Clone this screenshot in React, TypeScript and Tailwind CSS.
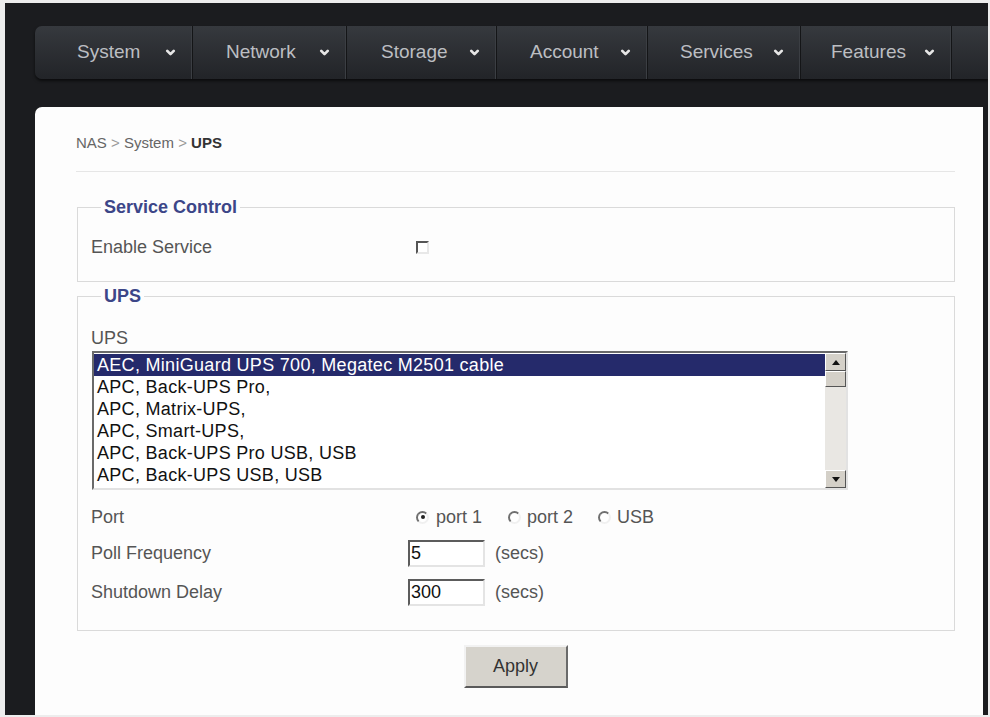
import { ChevronDown } from 'lucide-react';

const menus = [
  { label: 'System', w: 'w-[158px] pl-[42px]' },
  { label: 'Network', w: 'w-[154px] pl-[33px]' },
  { label: 'Storage', w: 'w-[150px] pl-[34px]' },
  { label: 'Account', w: 'w-[151px] pl-[33px]' },
  { label: 'Services', w: 'w-[153px] pl-[32px]' },
  { label: 'Features', w: 'w-[151px] pl-[30px]' },
];

const upsModels = [
  'AEC, MiniGuard UPS 700, Megatec M2501 cable',
  'APC, Back-UPS Pro,',
  'APC, Matrix-UPS,',
  'APC, Smart-UPS,',
  'APC, Back-UPS Pro USB, USB',
  'APC, Back-UPS USB, USB',
];

function Radio({ checked }: { checked?: boolean }) {
  return (
    <span className="shrink-0 w-[13px] h-[13px] rounded-full border-2 border-t-[#6f6f6f] border-l-[#6f6f6f] border-r-[#f0f0f0] border-b-[#f0f0f0] bg-white flex items-center justify-center">
      {checked && <span className="w-[4px] h-[4px] rounded-full bg-[#222]" />}
    </span>
  );
}

function ScrollButton({ up }: { up?: boolean }) {
  return (
    <div className="h-[18px] bg-[#d4d0c8] border border-t-white border-l-white border-r-[#555] border-b-[#555] flex items-center justify-center">
      <svg width="8" height="5" viewBox="0 0 8 5">
        <path d={up ? 'M0 5 L4 0 L8 5 Z' : 'M0 0 L4 5 L8 0 Z'} fill="#111" />
      </svg>
    </div>
  );
}

function SecsField({ value }: { value: string }) {
  return (
    <div className="flex items-center gap-[10px]">
      <div className="w-[77px] h-[27px] bg-white border-2 border-t-[#5c5c5c] border-l-[#5c5c5c] border-r-[#e4e4e4] border-b-[#e4e4e4] pl-[1px] flex items-center text-[18px] text-[#111]">
        {value}
      </div>
      <span className="text-[#555]">(secs)</span>
    </div>
  );
}

export default function App() {
  return (
    <div className="w-[990px] h-[717px] bg-[#ededed] pt-[3px] pl-[5px] pr-[2px] pb-[2px] flex font-['Liberation_Sans',Arial,sans-serif]">
      <div className="flex-1 bg-[#1b1c1f] flex flex-col pl-[30px] pt-[23px] overflow-hidden">
        {/* top menu */}
        <nav className="h-[53px] flex rounded-l-[7px] bg-gradient-to-b from-[#36393e] to-[#222428] shadow-[0_2px_3px_rgba(0,0,0,0.6)] shrink-0">
          {menus.map((m) => (
            <div
              key={m.label}
              className={`${m.w} h-full flex items-center justify-between pr-[15px] border-r border-r-[#141517] shadow-[inset_-1px_0_0_#3b3e43] text-[19px] text-[#bcbec2]`}
            >
              <span>{m.label}</span>
              <ChevronDown className="w-[13px] h-[13px] text-[#e6e6e6]" strokeWidth={5} />
            </div>
          ))}
          <div className="flex-1" />
        </nav>

        {/* main panel */}
        <div className="mt-[28px] mr-[5px] flex-1 bg-[#fdfdfd] rounded-tl-[7px] pl-[41px] pr-[28px] pt-[26px] text-[18px] text-[#555]">
          <div className="text-[15px] leading-[20px] text-[#666]">
            NAS <span className="text-[#999]">&gt;</span> System <span className="text-[#999]">&gt;</span>{' '}
            <span className="font-bold text-[#333]">UPS</span>
          </div>
          <div className="mt-[18px] border-t border-[#e6e6e6]" />

          <fieldset className="mt-[24px] ml-px border border-[#dadada] px-[13px] pb-[23px] pt-[18px]">
            <legend className="ml-[10px] px-[3px] font-bold text-[#3c4688] leading-[22px]">Service Control</legend>
            <div className="flex items-center h-[22px]">
              <span className="w-[325px]">Enable Service</span>
              <span className="shrink-0 w-[13px] h-[13px] bg-white border-2 border-t-[#555] border-l-[#555] border-r-[#e8e8e8] border-b-[#e8e8e8]" />
            </div>
          </fieldset>

          <fieldset className="mt-[3px] ml-px border border-[#dadada] px-[13px] pb-[24px] pt-[20px]">
            <legend className="ml-[10px] px-[3px] font-bold text-[#3c4688] leading-[22px]">UPS</legend>
            <div className="leading-[22px]">UPS</div>
            <div className="mt-[2px] ml-[1px] w-[756px] h-[139px] border-2 border-t-[#6a6a6a] border-l-[#6a6a6a] border-r-[#e2e2e2] border-b-[#e2e2e2] bg-white flex text-[#111] overflow-hidden">
              <div className="flex-1 pt-px tracking-[0.3px]">
                {upsModels.map((m, i) => (
                  <div
                    key={m}
                    className={`h-[22px] leading-[22px] pl-[3px] whitespace-nowrap ${i === 0 ? 'bg-[#252a6b] text-white' : ''}`}
                  >
                    {m}
                  </div>
                ))}
              </div>
              <div className="w-[21px] flex flex-col bg-[#e9e7e3]">
                <ScrollButton up />
                <div className="h-[16px] bg-[#d4d0c8] border border-t-white border-l-white border-r-[#555] border-b-[#555]" />
                <div className="flex-1" />
                <ScrollButton />
              </div>
            </div>

            <div className="mt-[16px] flex items-center h-[22px]">
              <span className="w-[325px]">Port</span>
              <div className="flex items-center">
                <Radio checked />
                <span className="ml-[7px] mr-[26px]">port 1</span>
                <Radio />
                <span className="ml-[6px] mr-[25px]">port 2</span>
                <Radio />
                <span className="ml-[6px]">USB</span>
              </div>
            </div>

            <div className="mt-[12px] flex items-center">
              <span className="w-[317px]">Poll Frequency</span>
              <SecsField value="5" />
            </div>

            <div className="mt-[12px] flex items-center">
              <span className="w-[317px]">Shutdown Delay</span>
              <SecsField value="300" />
            </div>
          </fieldset>

          <div className="mt-[14px] flex justify-center">
            <button
              type="button"
              className="w-[104px] h-[43px] bg-[#d6d3cc] border-2 border-t-[#f2f2f2] border-l-[#f2f2f2] border-r-[#6a6a6a] border-b-[#5a5a5a] text-[18px] text-[#333]"
            >
              Apply
            </button>
          </div>
        </div>
      </div>
    </div>
  );
}
